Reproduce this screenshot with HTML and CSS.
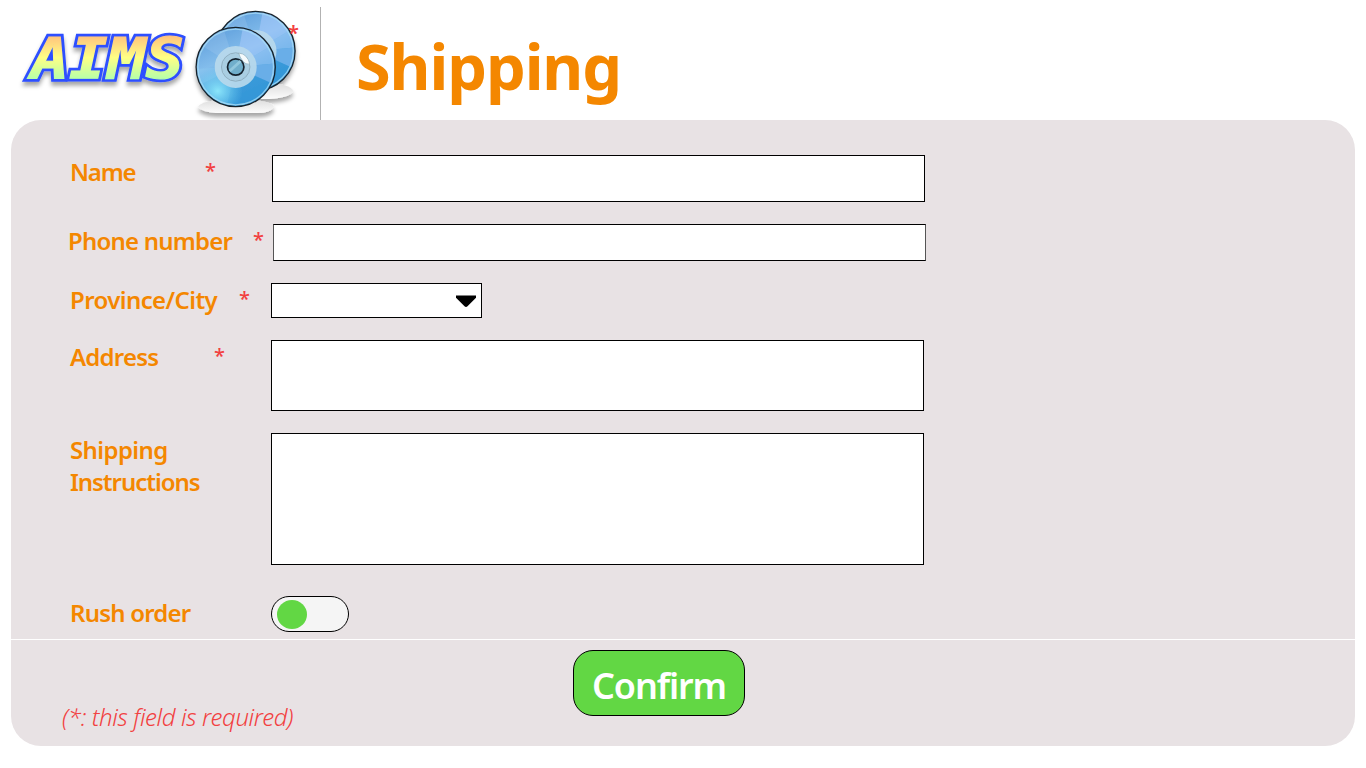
FILE: index.html
```html
<!DOCTYPE html>
<html lang="en">
<head>
<meta charset="utf-8">
<title>AIMS - Shipping</title>
<link rel="stylesheet" href="styles.css">
</head>
<body>
<header class="header">
  <div class="brand">
    <svg class="logo" width="320" height="120" viewBox="0 0 320 120" role="img" aria-label="AIMS">
      <defs>
        <linearGradient id="word" gradientUnits="userSpaceOnUse" x1="0" y1="34" x2="0" y2="83">
          <stop offset="0" stop-color="#ffbd7c"/><stop offset=".48" stop-color="#ffff84"/><stop offset="1" stop-color="#a8ffb0"/>
        </linearGradient>
        <linearGradient id="disc" x1=".2" y1="0" x2=".65" y2="1">
          <stop offset="0" stop-color="#5d9ddb"/><stop offset=".4" stop-color="#83bdec"/><stop offset=".7" stop-color="#4aa4df"/><stop offset="1" stop-color="#3d9ddb"/>
        </linearGradient>
        <radialGradient id="glow"><stop offset="0" stop-color="#8be6fa"/><stop offset="1" stop-color="#6ccbf1" stop-opacity="0"/></radialGradient>
        <linearGradient id="floor" x1="0" y1="0" x2="0" y2="1"><stop offset="0" stop-color="#dcdcdc"/><stop offset="1" stop-color="#fcfcfc"/></linearGradient>
        <filter id="shade" x="-20%" y="-20%" width="140%" height="150%"><feDropShadow dx="0" dy="4" stdDeviation="2" flood-color="#000" flood-opacity=".35"/></filter>
        <clipPath id="round"><circle r="39"/></clipPath>
        <g id="cd">
          <circle r="39.6" fill="url(#disc)"/>
          <g clip-path="url(#round)">
            <path d="M0 0L-44-28L-31-44L-14-44z" fill="#b7d9f6" opacity=".2"/>
            <path d="M0 0L8-44L31-39L40-24z" fill="#a5c8fa" opacity=".6"/>
            <path d="M0 0L40-24L44-4z" fill="#9bc5f5" opacity=".55"/>
            <path d="M0 0L44-4L44 20z" fill="#69aee8"/>
            <path d="M0 0L44 20L20 44L-10 44z" fill="#238bd3" opacity=".4"/>
            <ellipse cx="-18" cy="24" rx="25" ry="23" fill="url(#glow)"/>
            <path d="M0 0L-44 22L-44 2z" fill="#99def8" opacity=".2"/>
          </g>
          <circle r="37.8" fill="none" stroke="#a8dcf6" stroke-width="1.2" opacity=".8"/>
          <circle r="39.6" fill="none" stroke="#17232c" stroke-width="1.3"/>
          <circle r="17" fill="none" stroke="#b9d9eb" stroke-width="8" opacity=".92"/>
          <circle r="11" fill="none" stroke="#a9cee2" stroke-width="5"/>
          <circle r="14.2" fill="none" stroke="#8ba9ba" stroke-width=".9"/>
          <path d="M3-14Q12-13 14-3Q10-2 7-6Q4-10 3-14z" fill="#f5fafc" stroke="#88a9b9" stroke-width=".6"/>
          <circle r="8.2" fill="#6faecb" stroke="#17232e" stroke-width="1.7"/>
          <path d="M-6 4L5-6" stroke="#91c7dd" stroke-width="3"/>
        </g>
      </defs>
      <g filter="url(#shade)">
        <text class="wordmark outline" x="31" y="79.3" textLength="153" lengthAdjust="spacingAndGlyphs" aria-hidden="true">AIMS</text>
        <text class="wordmark" x="31" y="79.3" textLength="153" lengthAdjust="spacingAndGlyphs">AIMS</text>
      </g>
      <g filter="url(#shade)">
        <ellipse cx="264" cy="91" rx="29" ry="8" fill="url(#floor)"/>
        <path d="M198 107Q200 100 236 99Q272 100 274 107Q270 113 258 113H216Q202 112 198 107z" fill="url(#floor)"/>
        <use href="#cd" x="255.5" y="51"/>
        <use href="#cd" x="235.7" y="67"/>
      </g>
    </svg>
    <span class="star brand-star">*</span>
  </div>
  <h1 class="title">Shipping</h1>
</header>
<main class="panel">
  <form class="form">
    <div class="row row-name">
      <label class="label" for="name"><span class="w-name">Name</span><span class="star">*</span></label>
      <input class="field" id="name" type="text">
    </div>
    <div class="row row-phone">
      <label class="label" for="phone"><span class="w-phone">Phone number</span><span class="star">*</span></label>
      <input class="field" id="phone" type="text">
    </div>
    <div class="row row-city">
      <label class="label"><span class="w-city">Province/City</span><span class="star">*</span></label>
      <button class="field select" type="button" aria-label="Province/City">
        <svg width="22" height="13" viewBox="0 0 22 13"><path d="M1 .5H21V2.8L12.5 11.2Q11 12.6 9.5 11.2L1 2.8z"/></svg>
      </button>
    </div>
    <div class="row row-address">
      <label class="label" for="address"><span class="w-address">Address</span><span class="star">*</span></label>
      <textarea class="field" id="address"></textarea>
    </div>
    <div class="row row-notes">
      <label class="label" for="notes"><span class="w-notes">Shipping<br><span class="second">Instructions</span></span></label>
      <textarea class="field" id="notes"></textarea>
    </div>
    <div class="row row-rush">
      <span class="label"><span class="w-rush">Rush order</span></span>
      <button class="toggle" type="button" aria-label="Rush order"><span class="knob"></span></button>
    </div>
  </form>
  <footer class="footer">
    <p class="hint">(*: this field is required)</p>
    <button class="confirm" type="button">Confirm</button>
  </footer>
</main>
</body>
</html>
```
FILE: styles.css
```css
* { box-sizing: border-box; }
body { margin: 0; background: #fff; font-family: "Noto Sans", "Open Sans", sans-serif; height: 768px; overflow: hidden; }
button, input, textarea { font: inherit; margin: 0; padding: 0; }
.header { display: flex; height: 120px; }
.brand { position: relative; width: 321px; flex: none; background: linear-gradient(#b2b2b2, #b2b2b2) right bottom / 1px 113px no-repeat; }
.logo { display: block; }
.wordmark { font: italic bold 57px "DejaVu Sans Mono", monospace; fill: url(#word); stroke: url(#word); stroke-width: 1.2px; }
.outline { fill: #2d50ff; stroke: #2d50ff; stroke-width: 6.4px; }
.star { color: #f24040; font-size: 20px; font-weight: 500; letter-spacing: 0; }
.brand-star { position: absolute; left: 288px; top: 17px; line-height: 32px; font-weight: 600; }
.title { margin: 0; padding: 20px 0 0 35px; font-size: 63px; line-height: 92px; font-weight: 750; color: #f48700; letter-spacing: -1.1px; }
.panel { width: 1344px; height: 626px; margin-left: 11px; background: #e8e2e4; border-radius: 30px; }
.form { display: flex; flex-direction: column; gap: 22px; height: 520px; padding: 35px 0 0 59px; border-bottom: 1px solid #fff; }
.row { display: flex; flex: none; }
.label { width: 201px; flex: none; display: flex; padding-top: 1px; font-size: 24px; line-height: 32px; font-weight: 580; color: #f48700; white-space: nowrap; letter-spacing: -.8px; }
.label > span:first-child { flex: none; }
.label .star { position: relative; top: -1px; }
.field { display: block; width: 653px; height: 100%; border: 1px solid #000; border-radius: 0; background: #fff; resize: none; }
.row-name { height: 47px; }
.row-name .field { margin-left: 1px; }
.row-phone { height: 37px; }
.row-phone .label { margin-left: -2px; width: 205px; }
.row-phone .field { border-left-color: #555; border-right-color: #555; }
.row-city { height: 35px; }
.row-address { height: 71px; }
.row-notes { height: 132px; }
.row-rush { height: 36px; margin-top: 9px; }
.w-name { width: 135px; letter-spacing: -1.2px; }
.w-phone { width: 185px; }
.w-city { width: 169px; letter-spacing: -.6px; }
.w-address { width: 144px; }
.w-notes { letter-spacing: -.6px; }
.second { letter-spacing: -1.05px; }
.select { width: 211px; display: flex; align-items: center; justify-content: flex-end; padding: 1px 4px 0 0; }
.toggle { width: 78px; height: 36px; display: flex; align-items: center; padding-left: 5px; border: 1px solid #000; border-radius: 18px; background: #f5f5f5; }
.knob { width: 30px; height: 29px; border-radius: 50%; background: #62d744; }
.footer { display: flex; padding-top: 10px; }
.hint { width: 511px; margin: 0 0 0 51px; padding-top: 51px; font-size: 24px; line-height: 32px; font-style: italic; font-weight: 330; color: #f24040; white-space: nowrap; letter-spacing: -.37px; }
.confirm { width: 172px; height: 66px; padding-top: 5px; border: 1px solid #000; border-radius: 20px; background: #62d744; color: #fff; font-size: 36px; line-height: 48px; font-weight: 570; letter-spacing: -1.1px; }
```
